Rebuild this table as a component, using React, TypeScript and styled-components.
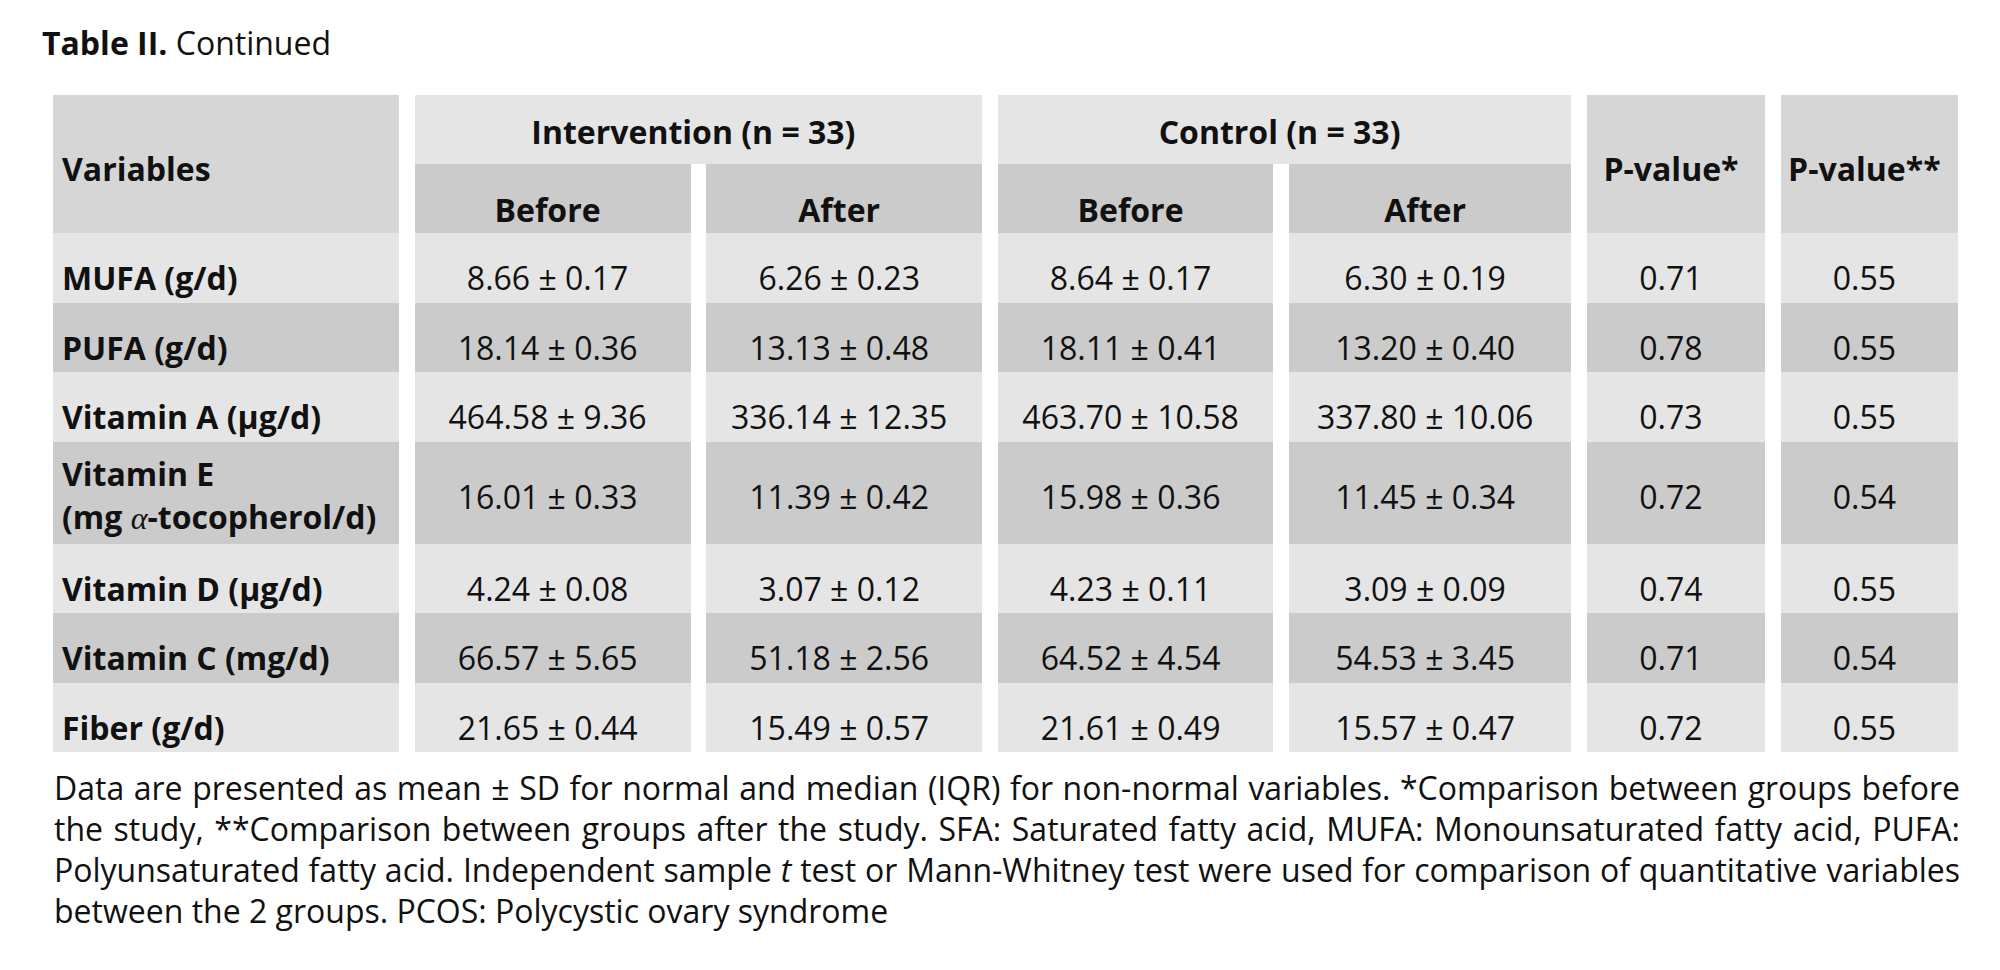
import React from 'react';
import styled, { createGlobalStyle } from 'styled-components';

const GlobalStyle = createGlobalStyle`
  html, body { margin: 0; padding: 0; background: #ffffff; }
  body { font-family: "Open Sans", "Noto Sans", "Liberation Sans", sans-serif; color: #111111; }
`;

type Tone = 'light' | 'mid' | 'dark';
const toneColor: Record<Tone, string> = {
  light: '#e5e5e5',
  mid: '#d6d6d6',
  dark: '#cbcbcb',
};

const Page = styled.div`
  width: 2000px;
  box-sizing: border-box;
  padding: 24px 0 0 42px;
`;

const Title = styled.h1`
  margin: 0;
  font-size: 32px;
  line-height: 38.4px;
  font-weight: 400;
`;

const TitleLabel = styled.b`
  font-weight: 700;
`;

const Table = styled.div`
  margin: 32.6px 0 0 11px;
  display: grid;
  grid-template-columns: 346px 276px 276px 275.5px 282.5px 178px 177.6px;
  column-gap: 15.6px;
  font-size: 32px;
`;

const Cell = styled.div<{ $tone: Tone }>`
  display: flex;
  align-items: center;
  justify-content: center;
  box-sizing: border-box;
  padding-right: 10px;
  background: ${(p) => toneColor[p.$tone]};
  white-space: nowrap;
`;

const GroupHeader = styled(Cell)`
  grid-column: span 2;
  font-weight: 700;
  line-height: 43.5px;
  padding-top: 15px;
  padding-bottom: 10.5px;
`;

const SubHeader = styled(Cell)`
  font-weight: 700;
  line-height: 43.5px;
  padding-top: 24px;
  padding-bottom: 1.5px;
`;

const SpanHeader = styled(Cell)<{ $left?: boolean }>`
  grid-row: span 2;
  font-weight: 700;
  line-height: 43.5px;
  padding-top: 10px;
  justify-content: ${(p) => (p.$left ? 'flex-start' : 'center')};
  padding-left: ${(p) => (p.$left ? '9px' : '0')};
`;

const ValueCell = styled(Cell)<{ $tall?: boolean }>`
  line-height: 43.5px;
  padding-top: ${(p) => (p.$tall ? '17px' : '23px')};
  padding-bottom: ${(p) => (p.$tall ? '8.5px' : '3px')};
`;

const LabelCell = styled(ValueCell)`
  justify-content: flex-start;
  padding-left: 9px;
  font-weight: 700;
  line-height: ${(p) => (p.$tall ? '43.6px' : '43.5px')};
  padding-top: ${(p) => (p.$tall ? '10px' : '23px')};
  padding-bottom: ${(p) => (p.$tall ? '3.3px' : '3px')};
`;

const Greek = styled.span`
  font-family: "Liberation Serif", "DejaVu Serif", serif;
  font-style: italic;
  font-weight: 400;
`;

const Footnote = styled.div`
  margin: 15px 0 0 12px;
  width: 1906px;
  font-size: 32px;
  line-height: 41px;
`;

const FootLine = styled.div<{ $last?: boolean }>`
  text-align: ${(p) => (p.$last ? 'left' : 'justify')};
  text-align-last: ${(p) => (p.$last ? 'left' : 'justify')};
`;

type Row = {
  label: React.ReactNode;
  tall?: boolean;
  values: string[];
};

const rows: Row[] = [
  { label: 'MUFA (g/d)', values: ['8.66 ± 0.17', '6.26 ± 0.23', '8.64 ± 0.17', '6.30 ± 0.19', '0.71', '0.55'] },
  { label: 'PUFA (g/d)', values: ['18.14 ± 0.36', '13.13 ± 0.48', '18.11 ± 0.41', '13.20 ± 0.40', '0.78', '0.55'] },
  { label: 'Vitamin A (µg/d)', values: ['464.58 ± 9.36', '336.14 ± 12.35', '463.70 ± 10.58', '337.80 ± 10.06', '0.73', '0.55'] },
  {
    label: (
      <span>
        Vitamin E
        <br />
        (mg <Greek>α</Greek>-tocopherol/d)
      </span>
    ),
    tall: true,
    values: ['16.01 ± 0.33', '11.39 ± 0.42', '15.98 ± 0.36', '11.45 ± 0.34', '0.72', '0.54'],
  },
  { label: 'Vitamin D (µg/d)', values: ['4.24 ± 0.08', '3.07 ± 0.12', '4.23 ± 0.11', '3.09 ± 0.09', '0.74', '0.55'] },
  { label: 'Vitamin C (mg/d)', values: ['66.57 ± 5.65', '51.18 ± 2.56', '64.52 ± 4.54', '54.53 ± 3.45', '0.71', '0.54'] },
  { label: 'Fiber (g/d)', values: ['21.65 ± 0.44', '15.49 ± 0.57', '21.61 ± 0.49', '15.57 ± 0.47', '0.72', '0.55'] },
];

const footLines: React.ReactNode[] = [
  'Data are presented as mean ± SD for normal and median (IQR) for non-normal variables. *Comparison between groups before',
  'the study, **Comparison between groups after the study. SFA: Saturated fatty acid, MUFA: Monounsaturated fatty acid, PUFA:',
  <>
    Polyunsaturated fatty acid. Independent sample <i>t</i> test or Mann-Whitney test were used for comparison of quantitative variables
  </>,
  'between the 2 groups. PCOS: Polycystic ovary syndrome',
];

export default function App() {
  return (
    <Page>
      <GlobalStyle />
      <Title>
        <TitleLabel>Table II.</TitleLabel> Continued
      </Title>
      <Table>
        <SpanHeader $tone="mid" $left>
          Variables
        </SpanHeader>
        <GroupHeader $tone="light">Intervention (n = 33)</GroupHeader>
        <GroupHeader $tone="light">Control (n = 33)</GroupHeader>
        <SpanHeader $tone="mid">P-value*</SpanHeader>
        <SpanHeader $tone="mid">P-value**</SpanHeader>
        <SubHeader $tone="dark">Before</SubHeader>
        <SubHeader $tone="dark">After</SubHeader>
        <SubHeader $tone="dark">Before</SubHeader>
        <SubHeader $tone="dark">After</SubHeader>
        {rows.map((row, i) => {
          const tone: Tone = i % 2 === 0 ? 'light' : 'dark';
          return (
            <React.Fragment key={i}>
              <LabelCell $tone={tone} $tall={row.tall}>
                {row.label}
              </LabelCell>
              {row.values.map((v, j) => (
                <ValueCell key={j} $tone={tone} $tall={row.tall}>
                  {v}
                </ValueCell>
              ))}
            </React.Fragment>
          );
        })}
      </Table>
      <Footnote>
        {footLines.map((line, i) => (
          <FootLine key={i} $last={i === footLines.length - 1}>
            {line}
          </FootLine>
        ))}
      </Footnote>
    </Page>
  );
}
